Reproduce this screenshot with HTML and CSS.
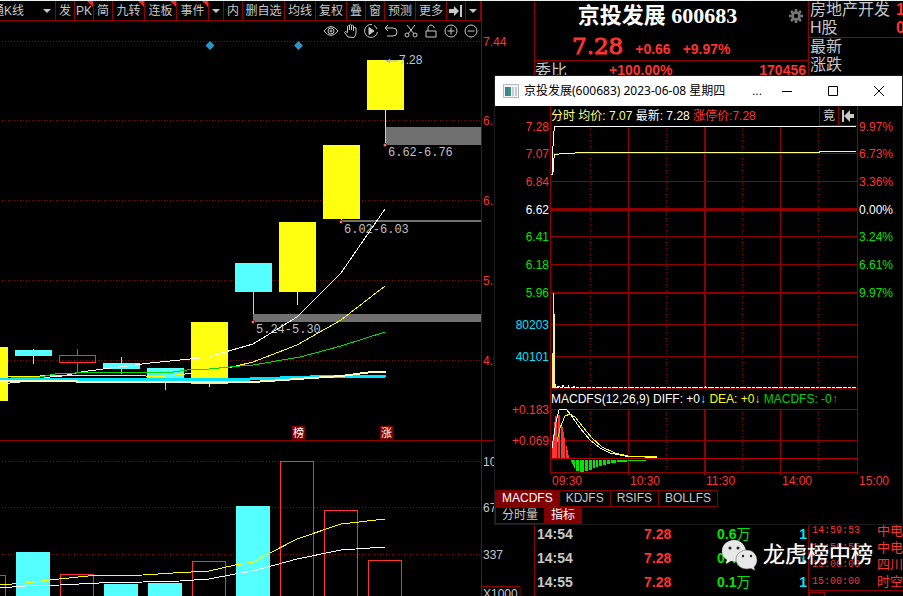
FILE: index.html
```html
<!DOCTYPE html>
<html lang="zh-CN">
<head>
<meta charset="utf-8">
<title>京投发展 600683</title>
<link rel="stylesheet" href="styles.css">
</head>
<body>
<main class="workspace">
  <section class="kline">
    <div class="kline-plot">
      <nav class="toolbar">
        <span class="period"><select aria-label="周期"><option>通K线</option></select></span>
        <button>发</button>
        <button class="flag">PK</button>
        <button>简</button>
        <button class="flag wide">九转</button>
        <button class="flag wide">连板</button>
        <button class="flag wide">事件</button>
        <button class="drop" aria-label="更多事件"><i class="caret"></i></button>
        <button>内</button>
        <button class="triple">删自选</button>
        <button class="wide">均线</button>
        <button class="wide">复权</button>
        <button>叠</button>
        <button>窗</button>
        <button class="wide">预测</button>
        <button class="wide">更多</button>
        <button aria-label="移到最后"><svg width="14" height="12" viewBox="0 0 14 12"><path d="M0 4h5V1l5 5-5 5V8H0zM11 0h2v12h-2z" fill="#c8c8c8"/></svg></button>
        <button class="drop" aria-label="菜单"><i class="caret"></i></button>
      </nav>
      <div class="draw-tools">
        <button aria-label="显示"><svg viewBox="0 0 16 16"><path d="M1 8q7-9 14 0q-7 9-14 0z"/><circle cx="8" cy="8" r="3"/><circle cx="8" cy="8" r="1"/></svg></button>
        <button aria-label="平移"><svg viewBox="0 0 16 16"><path d="M5 14L1.500 9.500Q2 7.500 4.500 9.500V3.500q1-1.500 2 0V7V2q1-1.500 2 0v5V3q1-1.500 2 0v5V5q1.500-1.500 2.500 0v5q0 2-2 4.500z"/></svg></button>
        <button aria-label="播放"><svg viewBox="0 0 16 16"><path d="M9 1.500A6.500 6.500 0 1 0 14.500 9M11 2.500A6.500 6.500 0 0 1 14 6"/><path d="M6 4.500v7l5-3.500z" fill="#c8c8c8"/></svg></button>
        <button aria-label="撤销"><svg viewBox="0 0 16 16"><path d="M5 2L2 5l3 3M2 5h8q4 0 4 4t-4 4H4"/></svg></button>
        <button aria-label="裁剪"><svg viewBox="0 0 16 16"><path d="M4 2l7 9M12 2L5 11"/><circle cx="4" cy="12" r="2"/><circle cx="12" cy="12" r="2"/></svg></button>
        <button aria-label="锁定"><svg viewBox="0 0 16 16"><path d="M3 8h10v6H3zM5 8V4q3-4 6 0v1"/></svg></button>
        <button aria-label="放大"><svg viewBox="0 0 16 16"><circle cx="8" cy="8" r="6"/><path d="M4.500 8h7M8 4.500v7"/></svg></button>
        <button aria-label="缩小"><svg viewBox="0 0 16 16"><circle cx="8" cy="8" r="6"/><path d="M4.500 8h7"/></svg></button>
      </div>
      <svg class="chart" viewBox="0 40 481 556" preserveAspectRatio="xMaxYMin meet">
        <g class="dots" shape-rendering="crispEdges">
          <path d="M2 41.500H481M2 120.500H481M2 200.500H481M2 280.500H481M2 360.500H481M2 461.500H481M2 507.500H481M2 554.500H481"/>
        </g>
        <path class="grid" d="M0 440.500H481"/>
        <path d="M210 41l4.500 4.500-4.500 4.500-4.500-4.500zM298.500 41l4.500 4.500-4.500 4.500-4.500-4.500z" fill="#2896c8"/>
        <g shape-rendering="crispEdges">
          <path d="M385 127h96v18h-96zM341 220h140v2H341zM253 314h228v8H253z" fill="#707070"/>
          <path d="M15 350h37v6H15zM33 349h1v15h-1zM103 363h37v6h-37zM121 357h1v17h-1zM147 368h37v12h-37zM165 380h1v10h-1zM235 263h37v29h-37zM253 292h1v22h-1z" fill="#54ffff"/>
          <path d="M0 347h8v54H0zM191 322h37v62h-37zM209 384h1v3h-1zM279 222h37v70h-37zM297 292h1v13h-1zM323 145h37v74h-37zM341 219h1v2h-1zM367 60h37v50h-37zM385 110h1v17h-1z" fill="#ffff10"/>
          <path d="M77.500 349v6M77.500 363v9M59.500 355.500h36v7h-36z" fill="none" stroke="#ff3232"/>
          <path d="M385.500 127v17" stroke="#c8c8c8"/>
        </g>
        <g fill="#c8c8c8" stroke="#900000"><circle cx="385" cy="145" r="1.500"/><circle cx="341" cy="222" r="1.500"/><circle cx="253" cy="322" r="1.500"/></g>
        <g class="mono">
          <text x="388" y="156">6.62-6.76</text><text x="344" y="233">6.02-6.03</text><text x="256" y="333">5.24-5.30</text>
        </g>
        <path d="M386 61h12" stroke="#b0b0d0"/><path d="M385 61l5-2v4z" fill="#b0b0d0"/>
        <text class="gray" x="399" y="64">7.28</text>
        <g class="lines" shape-rendering="crispEdges">
          <path stroke="#fff" d="M0 384L20 382L50 377L62 376L81 372L103 369L127 366L150 363L180 360L209 357L225 352L253 344L297 317L341 273L385 209"/>
          <path stroke="#ffff00" d="M0 378L11 376H40L60 375H143L146 376H165L185 374L209 371L232 367L253 362L297 345L341 320L385 286"/>
          <path stroke="#00e000" d="M11 378L40 377L55 374L75 373L99 372H173L187 370L209 369L240 366L253 365L300 357L341 346L385 332"/>
          <path stroke="#00e4ff" stroke-width="3" d="M0 379H250L310 377L386 376"/>
          <path stroke="#ffffb8" stroke-width="2" d="M0 381H77V382H253L297 379L341 376L372 372H386"/>
        </g>
        <g class="tag"><path d="M292 426h13v13h-13zM380 426h13v13h-13z" fill="#800000"/><text x="293" y="437">榜</text><text x="381" y="437">涨</text></g>
        <g shape-rendering="crispEdges">
          <path fill="#54ffff" d="M16 552h34v44H16zM104 584h34v12h-34zM148 583h34v13h-34zM236 506h34v90h-34z"/>
          <path fill="none" stroke="#ff3232" d="M0 575.500H5.500V597M60.500 597V574.500h33V597M192.500 597V561.500h33V597M280.500 597V461.500h33V597M324.500 597V510.500h33V597M368.500 597V560.500h33V597"/>
        </g>
        <g class="lines" shape-rendering="crispEdges">
          <path stroke="#ffff00" d="M0 585L25 583L50 580L88 576L143 575L173 573L209 571L235 565L253 562L270 553L297 539L341 524L385 519"/>
          <path stroke="#fff" d="M0 588L25 586L60 585L99 583L143 582L180 581L209 579L235 574L253 571L297 559L341 550L385 547"/>
        </g>
      </svg>
    </div>
    <svg class="axis" viewBox="481 1 53 595" preserveAspectRatio="xMinYMin meet">
      <path class="grid" d="M481.500 1V596M481 440.500h53M482 586.500h38v12h-38"/>
      <g class="red"><text x="483" y="46">7.44</text><text x="483" y="125">6.82</text><text x="483" y="205">6.20</text><text x="483" y="285">5.58</text><text x="483" y="365">4.96</text></g>
      <g class="gray"><text x="483" y="466">1013</text><text x="483" y="512">675</text><text x="483" y="559">337</text><text x="483" y="598">X1000</text></g>
    </svg>
  </section>

  <section class="quote">
    <div class="quote-head">
      <div class="stock">
        <div class="stock-main">
          <h1>京投发展 600683</h1>
          <button class="gear" aria-label="设置"><svg viewBox="0 0 16 16"><circle cx="8" cy="8" r="4" fill="none" stroke="#787878" stroke-width="3"/><path d="M8 0v3M8 13v3M0 8h3M13 8h3M2.300 2.300l2 2M11.700 11.700l2 2M2.300 13.700l2-2M11.700 4.300l2-2" stroke="#787878" stroke-width="3"/></svg></button>
          <p class="price"><strong>7.28</strong><b>+0.66</b><b>+9.97%</b></p>
        </div>
        <div class="ratio"><span>委比</span><b>+100.00%</b><b class="end">170456</b></div>
      </div>
      <div class="sector">
        <div class="sector-block"><p>房地产开发<b>1</b></p><p>H股<b>0</b></p></div>
        <div class="sector-block"><p>最新</p><p>涨跌</p></div>
      </div>
    </div>
    <div class="lists">
      <table class="ticks">
        <tr><td>14:54</td><td class="up">7.28</td><td class="down">0.6<span>万</span></td><td class="count">1</td></tr>
        <tr><td>14:54</td><td class="up">7.28</td><td class="down">0.4<span>万</span></td><td class="count">1</td></tr>
        <tr><td>14:55</td><td class="up">7.28</td><td class="down">0.1<span>万</span></td><td class="count">1</td></tr>
      </table>
      <div class="alerts">
        <ul>
          <li><time>14:59:53</time>中电兴</li>
          <li><time>14:59:55</time>中电兴</li>
          <li><time>15:00:00</time>四川长</li>
          <li><time>15:00:00</time>时空科</li>
        </ul>
        <div class="alerts-foot"></div>
      </div>
    </div>
  </section>
</main>

<section class="dialog" role="dialog" aria-label="分时">
  <header class="titlebar">
    <svg width="16" height="14" viewBox="0 0 16 14"><path d="M.5.5h15v13H.5z" fill="#f4f4f4" stroke="#b0b8c0"/><path d="M2 3h6v9H2z" fill="#3c9478"/><path d="M2 3h3v9H2z" fill="#4878a8"/><path d="M9 3h2v9H9zM12 3h2v9h-2z" fill="#c4ccd8"/></svg>
    <h2>京投发展(600683) 2023-06-08 星期四</h2>
    <span class="more">...</span>
    <button aria-label="最小化"><svg viewBox="0 0 12 12"><path d="M1 6.500h10"/></svg></button>
    <button aria-label="最大化"><svg viewBox="0 0 12 12"><path d="M1.500 1.500h9v9h-9z"/></svg></button>
    <button aria-label="关闭"><svg viewBox="0 0 12 12"><path d="M1 1l10 10M11 1L1 11"/></svg></button>
  </header>
  <div class="legend">
    <p><span class="pale">分时 均价: 7.07</span> <span class="white">最新: 7.28</span> <span class="redtext">涨停价:7.28</span></p>
    <button>竟</button>
    <button aria-label="回到最前"><svg width="14" height="12" viewBox="0 0 14 12"><path d="M1 0h2v12H1zM13 4H9V0L3 6l6 6V8h4z" fill="#c8c8c8"/></svg></button>
  </div>
  <svg class="minute" viewBox="495 126 407 364">
    <g shape-rendering="crispEdges">
      <g class="grid">
        <path d="M550.500 126V472M857.500 126V475M628.500 126V388M628.500 409V475M780.500 126V388M780.500 409V475M551.500 472V475"/>
        <path d="M551 153.500H857M551 181.500H857M551 236.500H857M551 264.500H857M551 324.500H857M551 356.500H857M551 388.500H857M551 409.500H857M551 440.500H857M550 472.500H857"/>
        <path stroke-width="2" d="M705 126V388M705 409V475M551 293H857"/>
        <path stroke-width="3" d="M551 209.500H857"/>
        <path stroke="#b00000" d="M551 458.500H857"/>
      </g>
      <path class="dots" d="M590.500 128V388M666.500 128V388M742.500 128V388M818.500 128V388M590.500 412V472M666.500 412V472M742.500 412V472M818.500 412V472"/>
      <g class="lines">
        <path stroke="#ffff80" d="M553.500 172V162L554.500 154.500L563 153.500L587 152.500H819V151.500H856"/>
        <path stroke="#fff" d="M551 174.500H552.500V158L553.500 135L554.500 126.500H856"/>
      </g>
      <path fill="#f5f080" d="M552 353h1v35h-1zM553 293h1v95h-1zM554 314h1v74h-1z"/>
      <path d="M555 387.500H856" stroke="#fff" stroke-dasharray="4 1 3 1 6 1"/>
      <path fill="#fff" d="M555 384h1v3h-1zM557 386h3v1h-3zM562 385h2v2h-2zM568 385h1v2h-1zM573 386h2v1h-2zM705 386h1v1h-1z"/>
      <path fill="#ff3232" d="M552 448h1v10h-1zM553 434h1v24h-1zM554 422h1v36h-1zM555 416h2v42h-2zM558 415h2v43h-2zM561 423h1v35h-1zM562 427h1v31h-1zM563 432h1v26h-1zM564 438h1v20h-1zM566 446h1v12h-1zM567 450h1v8h-1zM568 455h1v3h-1z"/>
      <path fill="#00e600" d="M571 460h1v2h-1zM572 460h1v4h-1zM573 460h1v6h-1zM574 460h1v8h-1zM576 460h3v11h-3zM580 460h4v12h-4zM585 460h3v11h-3zM589 460h3v10h-3zM593 460h2v8h-2zM596 460h2v7h-2zM599 460h3v6h-3zM603 460h3v5h-3zM607 460h3v4h-3zM611 460h5v3h-5zM617 460h10v2h-10zM628 460h18v1h-18z"/>
      <g class="lines">
        <path stroke="#fff" d="M552 448L556 422L559 410L561 409H566L571 415L580 428L590 440L600 448L610 453L625 456L645 457H657"/>
        <path stroke="#ffff00" d="M557 442L560 428L565 416L570 414L575 417L583 427L592 438L602 447L615 453L628 456L657 457"/>
      </g>
    </g>
    <g class="red left"><text x="549" y="131">7.28</text><text x="549" y="158">7.07</text><text x="549" y="186">6.84</text><text x="549" y="414">+0.183</text><text x="549" y="445">+0.069</text></g>
    <g class="whitefill"><text class="left" x="549" y="214">6.62</text><text x="859" y="214">0.00%</text></g>
    <g class="green left"><text x="549" y="241">6.41</text><text x="549" y="269">6.18</text><text x="549" y="297">5.96</text></g>
    <g class="cyan left"><text x="549" y="329">80203</text><text x="549" y="361">40101</text></g>
    <g class="red"><text x="859" y="131">9.97%</text><text x="859" y="158">6.73%</text><text x="859" y="186">3.36%</text></g>
    <g class="green"><text x="859" y="241">3.24%</text><text x="859" y="269">6.61%</text><text x="859" y="297">9.97%</text></g>
    <text x="551" y="403"><tspan fill="#fff">MACDFS(12,26,9) DIFF: +0</tspan><tspan fill="#54ffff">↓</tspan><tspan fill="#ffff00"> DEA: +0</tspan><tspan fill="#54ffff">↓</tspan><tspan fill="#00d000"> MACDFS: -0</tspan><tspan fill="#ff3232">↑</tspan></text>
    <g class="red"><text x="552" y="485">09:30</text><text x="630" y="485">10:30</text><text x="706" y="485">11:30</text><text x="782" y="485">14:00</text><text x="859" y="485">15:00</text></g>
  </svg>
  <div class="tabs">
    <button class="active">MACDFS</button><button>KDJFS</button><button>RSIFS</button><button>BOLLFS</button>
  </div>
  <div class="tabs">
    <button>分时量</button><button class="active">指标</button>
  </div>
</section>

<div class="watermark">
  <svg width="36" height="32" viewBox="0 0 36 32"><path fill="#e8e8e8" d="M12 1C5 1 0 6 0 12c0 4 2 7 5 9l-1 4 5-3c12 3 16-4 15-10S19 1 12 1z"/><path fill="#e8e8e8" stroke="#555" stroke-width=".5" d="M25 11c-7 0-11 5-11 9.500S18 30 25 30l4-.500 4 2-1-3.500c2-2 3-4 3-7 0-5-4-10-10-10z"/><g fill="#222"><circle cx="8" cy="9" r="1.500"/><circle cx="16" cy="9" r="1.500"/><circle cx="21" cy="17" r="1.200"/><circle cx="29" cy="17" r="1.200"/></g></svg>
  <span>龙虎榜中榜</span>
</div>
</body>
</html>
```
FILE: styles.css
```css
* { box-sizing: border-box; margin: 0; padding: 0; }

body {
  position: relative;
  height: 100vh;
  overflow: hidden;
  background: #000;
  color: #c8c8c8;
  font: 12px/16px "Liberation Sans", "Noto Sans CJK SC", sans-serif;
}

button, select {
  border: 0;
  background: none;
  color: inherit;
  font: inherit;
  white-space: nowrap;
}

text { font-size: 12px; }

.workspace {
  display: grid;
  grid-template-columns: minmax(0, 1fr) 369px;
  height: 100%;
  border-top: 1px solid #e8f0f0;
}

/* K-line panel */
.kline { display: grid; grid-template-columns: minmax(0, 1fr) 53px; min-height: 0; }
.kline-plot { display: flex; flex-direction: column; min-width: 0; min-height: 0; }
.chart, .axis, .minute { display: block; width: 100%; }
.chart { flex: 1; min-height: 0; }
.axis { height: 100%; }
.minute { overflow: visible; }

.toolbar { display: flex; height: 20px; border-bottom: 1px solid #900000; }
.toolbar button, .period {
  display: flex;
  flex: none;
  position: relative;
  align-items: center;
  justify-content: center;
  width: 19px;
  border-right: 1px solid #900000;
}
.toolbar .wide { width: 31px; }
.toolbar .flag.wide { width: 32px; }
.toolbar .triple { width: 42px; }
.toolbar .drop { width: 15px; }
.toolbar .period { flex: 1; justify-content: flex-start; overflow: hidden; }
.period select { appearance: none; width: 64px; margin-left: -8px; }
.period::after, .caret {
  content: "";
  border: 4px solid transparent;
  border-top-color: #c8c8c8;
  border-bottom: 0;
}
.period::after { position: absolute; right: 4px; }
.flag::after {
  content: "";
  position: absolute;
  top: 0;
  right: 0;
  border-top: 6px solid #ff2020;
  border-left: 6px solid transparent;
}

.draw-tools { display: flex; justify-content: flex-end; height: 19px; padding-top: 2px; }
.draw-tools button { width: 20px; height: 16px; }
.draw-tools svg { width: 16px; height: 16px; fill: none; stroke: #c8c8c8; }

.grid { fill: none; stroke: #900000; }
.dots { fill: none; stroke: #900000; stroke-dasharray: 1 2; }
.lines { fill: none; stroke-width: 1px; }
.mono text { fill: #c0c0c0; font-family: "Liberation Mono", monospace; }
.tag text { fill: #fff; font-size: 11px; }
.red { fill: #ff3232; }
.green { fill: #00e600; }
.cyan { fill: #00e4ff; }
.gray { fill: #c0c8d0; }
.whitefill { fill: #fff; }
.left { text-anchor: end; }

/* Quote panel */
.quote {
  display: flex;
  flex-direction: column;
  justify-content: space-between;
  min-width: 0;
  border-left: 1px solid #900000;
}
.quote-head, .lists { display: grid; grid-template-columns: 273px minmax(0, 1fr); }
.stock-main {
  display: grid;
  grid-template-columns: 1fr 24px;
  height: 60px;
  border-bottom: 1px solid #900000;
}
h1 {
  padding-right: 4px;
  color: #fff;
  font: bold 22px/29px "Liberation Serif", "Noto Sans CJK SC", serif;
  text-align: center;
}
.gear { height: 29px; }
.gear svg { display: block; width: 14px; height: 14px; margin-left: 5px; }
.price {
  display: flex;
  grid-column: 1 / -1;
  gap: 12px;
  align-items: baseline;
  padding-left: 37px;
  color: #ff3232;
}
.price strong { font: 23px/32px "DejaVu Serif", serif; -webkit-text-stroke: 1px #ff3232; }
.price b, .ratio b { font-size: 14px; color: #ff3232; }
.ratio { display: flex; line-height: 19px; }
.ratio span { width: 74px; font-size: 16px; }
.ratio .end { margin-left: auto; padding-right: 2px; }
.sector { overflow: hidden; border-left: 1px solid #900000; font-size: 16px; line-height: 18px; }
.sector p { display: flex; justify-content: space-between; padding-left: 1px; }
.sector b { flex: none; width: 7px; color: #ff3232; }
.sector-block:first-child { border-bottom: 1px solid #900000; }

.lists { align-items: start; height: 74px; }
.ticks {
  width: 100%;
  border-collapse: collapse;
  table-layout: fixed;
  font-size: 14px;
  font-weight: bold;
  line-height: 24px;
}
.ticks td { height: 24px; padding-left: 2px; }
.ticks td:first-child { width: 107px; }
.ticks .up { width: 73px; color: #ff3232; }
.ticks .down { color: #00e600; }
.ticks .down span { font-weight: normal; }
.ticks .count { width: 24px; padding-right: 1px; color: #00e4ff; text-align: right; }
.alerts { overflow: hidden; border-left: 1px solid #900000; color: #ff3232; }
.alerts ul { border-bottom: 1px solid #900000; list-style: none; }
.alerts li { display: flex; gap: 17px; padding-left: 3px; font-size: 13px; line-height: 17px; white-space: nowrap; }
.alerts time { font: 10px/17px "Liberation Mono", monospace; }
.alerts-foot { width: 16px; height: 16px; margin-top: 1px; border: 1px solid #900000; }

/* Intraday window */
.dialog {
  position: absolute;
  top: 76px;
  right: 1px;
  width: 407px;
  background: #000;
  outline: 1px solid #1c1c1c;
}
.titlebar {
  display: flex;
  align-items: center;
  height: 30px;
  padding: 0 0 0 8px;
  background: #fff;
  color: #000;
}
.titlebar h2 {
  flex: 1;
  padding-left: 5px;
  font: 12px/16px "Noto Sans", "Noto Sans CJK SC", sans-serif;
  white-space: nowrap;
}
.titlebar .more { width: 12px; }
.titlebar button { width: 46px; height: 30px; }
.titlebar button svg { display: block; width: 12px; height: 12px; margin: auto; fill: none; stroke: #000; }
.legend { display: flex; height: 20px; padding: 0 44px 0 55px; }
.legend p { flex: 1; border-left: 1px solid #900000; line-height: 20px; white-space: nowrap; }
.legend button {
  display: flex;
  align-items: center;
  justify-content: center;
  width: 19px;
  border: solid #900000;
  border-width: 0 0 1px 1px;
}
.legend button:last-child { border-right-width: 1px; width: 20px; }
.pale { color: #ffff80; }
.white { color: #fff; }
.redtext { color: #ff3232; }
.tabs { display: flex; }
.tabs button { height: 17px; margin-right: -1px; padding: 0 6px; border: 1px solid #800000; line-height: 15px; }
.tabs .active { background: #800000; color: #fff; }

.watermark {
  display: flex;
  position: absolute;
  right: 30px;
  bottom: 25px;
  gap: 5px;
  align-items: center;
  color: #fff;
  font-size: 22px;
  line-height: 32px;
  text-shadow: 1px 1px 2px #000, 0 0 1px #fff;
}
```
